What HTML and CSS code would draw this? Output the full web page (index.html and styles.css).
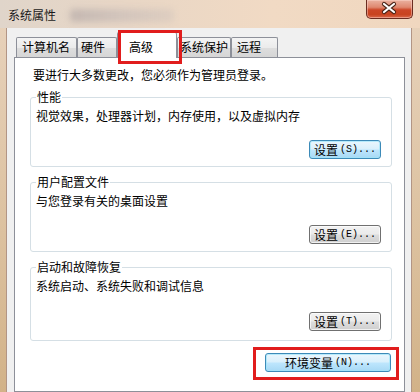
FILE: index.html
```html
<!DOCTYPE html>
<html lang="zh-CN">
<head>
<meta charset="utf-8">
<title>系统属性</title>
<link rel="stylesheet" href="styles.css">
</head>
<body>
<div class="window">
  <div class="titlebar">
    <span class="title">系统属性</span>
    <span class="redacted"></span>
    <div class="close">
      <svg width="46" height="19" viewBox="0 0 46 19">
        <path d="M18 5 L28 13 M28 5 L18 13" stroke="#4a2418" stroke-width="4.2" stroke-linecap="round" fill="none"/>
        <path d="M18 5 L28 13 M28 5 L18 13" stroke="#ffffff" stroke-width="2.2" stroke-linecap="round" fill="none"/>
      </svg>
    </div>
  </div>
  <div class="client">
    <div class="tabs">
      <div class="tab t1">计算机名</div>
      <div class="tab t2">硬件</div>
      <div class="tab t3 active">高级<span class="mark mark-tab"></span></div>
      <div class="tab t4">系统保护</div>
      <div class="tab t5">远程</div>
    </div>
    <div class="panel">
      <p class="intro">要进行大多数更改，您必须作为管理员登录。</p>
      <fieldset class="group">
        <legend>性能</legend>
        <p class="desc">视觉效果，处理器计划，内存使用，以及虚拟内存</p>
        <div class="actions"><button class="btn btn-default">设置<span class="key">(S)...</span></button></div>
      </fieldset>
      <fieldset class="group">
        <legend>用户配置文件</legend>
        <p class="desc">与您登录有关的桌面设置</p>
        <div class="actions"><button class="btn">设置<span class="key">(E)...</span></button></div>
      </fieldset>
      <fieldset class="group group-last">
        <legend>启动和故障恢复</legend>
        <p class="desc">系统启动、系统失败和调试信息</p>
        <div class="actions"><button class="btn">设置<span class="key">(T)...</span></button></div>
      </fieldset>
      <div class="env-row">
        <div class="env-wrap">
          <button class="btn btn-default btn-env">环境变量<span class="key">(N)...</span></button>
          <span class="mark mark-env"></span>
        </div>
      </div>
    </div>
  </div>
</div>
</body>
</html>
```
FILE: styles.css
```css
* { box-sizing: border-box; }
html, body {
  margin: 0;
  padding: 0;
  width: 420px;
  height: 392px;
  overflow: hidden;
}
body {
  font-family: "Noto Sans CJK SC", "Noto Sans", sans-serif;
  font-size: 12px;
  color: #000;
}
.window {
  width: 420px;
  height: 392px;
  display: flex;
  flex-direction: column;
  background: linear-gradient(to bottom, #e8d3bd 0%, #dcc19f 60%, #d2b288 100%);
}
.titlebar {
  height: 28px;
  flex: none;
  display: flex;
  align-items: flex-start;
  background: linear-gradient(to right, #e0d5ca 0%, #e8d6c5 30%, #f1dac4 65%, #f0d7bf 100%);
}
.title {
  margin-left: 8px;
  margin-top: 8px;
  line-height: 14px;
  color: #1a1a1a;
}
.redacted {
  width: 104px;
  height: 13px;
  margin-left: 14px;
  margin-top: 9px;
  background: linear-gradient(to right, rgba(170,160,160,0.55), rgba(190,180,180,0.5), rgba(200,190,185,0.35));
  filter: blur(3px);
  border-radius: 4px;
}
.close {
  margin-left: auto;
  margin-right: 7px;
  width: 47px;
  height: 19px;
  border: 1px solid #6a2c20;
  border-top: none;
  border-radius: 0 0 5px 5px;
  background: linear-gradient(to bottom, #eab2a0 0%, #df8870 40%, #cc4627 55%, #c8431f 80%, #d9684a 100%);
  box-shadow: inset 0 0 0 1px rgba(255, 220, 210, 0.45);
  display: flex;
  align-items: center;
  justify-content: center;
}
.close svg { display: block; margin-left: -1px; margin-top: -1px; }
.client {
  flex: 1;
  margin: 0 8px 0 6px;
  border-left: 1px solid #b29585;
  border-right: 1px solid #b29585;
  background: #f0f0f0;
  padding: 4px 6px 0 7px;
  display: flex;
  flex-direction: column;
}
.tabs {
  display: flex;
  align-items: flex-end;
  height: 25px;
  margin-left: 2px;
  flex: none;
}
.tab {
  height: 20px;
  line-height: 18px;
  border: 1px solid #8d9099;
  border-bottom: none;
  border-radius: 2px 2px 0 0;
  background: linear-gradient(to bottom, #f4f4f4 0%, #ebebeb 50%, #dddddd 55%, #d6d6d6 100%);
  white-space: nowrap;
}
.t1 { width: 61px; padding-left: 5px; }
.t2 { width: 40px; padding-left: 3px; }
.t3 { width: 60px; padding-left: 11px; }
.t4 { width: 54px; padding-left: 2px; }
.t5 { width: 47px; padding-left: 5px; }
.tab.active {
  position: relative;
  z-index: 2;
  height: 26px;
  margin-bottom: -1px;
  padding-top: 7px;
  line-height: 14px;
  background: #fff;
}
.mark {
  position: absolute;
  border: 3px solid #e11d1d;
  pointer-events: none;
}
.mark-tab {
  left: 0;
  top: -3px;
  width: 64px;
  height: 34px;
}
.panel {
  flex: 1;
  border: 1px solid #8d9099;
  background: #fff;
  padding: 10px 12px 0 15px;
}
.intro {
  margin: 0;
  padding-left: 3px;
  line-height: 14px;
}
.group {
  margin: 8px 0 0;
  border: 1px solid #d5dfe5;
  border-radius: 3px;
  padding: 5px 10px 7px 5px;
  min-width: 0;
}
.group legend {
  padding: 0 1px;
  line-height: 14px;
}
.desc {
  margin: 0;
  line-height: 14px;
}
.actions {
  display: flex;
  justify-content: flex-end;
  margin-top: 17px;
}
.group-last { padding-bottom: 9px; }
.group-last .actions { margin-top: 19px; }
.btn {
  width: 72px;
  height: 19px;
  padding: 0;
  margin: 0;
  font-family: "Noto Sans CJK SC", "Noto Sans", sans-serif;
  font-size: 12px;
  line-height: 17px;
  color: #000;
  border: 1px solid #707070;
  border-radius: 3px;
  background: linear-gradient(to bottom, #f2f2f2 0%, #ebebeb 48%, #dddddd 52%, #cfcfcf 100%);
  box-shadow: inset 0 0 0 1px rgba(255,255,255,0.7);
  display: flex;
  align-items: center;
  justify-content: center;
}
.btn-default {
  border-color: #3c8ab8;
  background: linear-gradient(to bottom, #eaf6fd 0%, #d9f0fc 48%, #bee6fd 52%, #a7d9f5 100%);
  box-shadow: inset 0 0 0 1px rgba(160, 230, 250, 0.7);
}
.key {
  font-family: "Liberation Mono", "DejaVu Sans Mono", monospace;
  font-size: 10px;
  margin-left: 2px;
}
.env-row {
  display: flex;
  justify-content: flex-end;
  margin-top: 12px;
  margin-right: 1px;
}
.env-wrap { position: relative; }
.btn-env { width: 126px; }
.mark-env {
  left: -12px;
  top: -6px;
  width: 146px;
  height: 33px;
}
```
